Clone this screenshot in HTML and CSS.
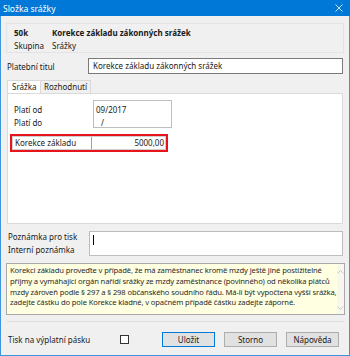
FILE: index.html
```html
<!DOCTYPE html>
<html lang="cs">
<head>
  <meta charset="UTF-8" />
  <title>Složka srážky</title>
  <link rel="stylesheet" href="styles.css">
</head>
<body>
  <div class="dialog">
    <div class="titlebar">
      <span class="title">Složka srážky</span>
      <svg class="close" width="8" height="8" viewBox="0 0 8 8"><path d="M0.5 0.5L7.5 7.5M7.5 0.5L0.5 7.5" stroke="#cfe3f7" stroke-width="1"/></svg>
    </div>

    <div class="content">
      <div class="head-panel">
        <b>50k</b><b>Korekce základu zákonných srážek</b>
        <span>Skupina</span><span>Srážky</span>
      </div>

      <div class="row">
        <label class="lbl">Platební titul</label>
        <div class="field">Korekce základu zákonných srážek</div>
      </div>

      <div class="tabs">
        <div class="tab active">Srážka</div>
        <div class="tab">Rozhodnutí</div>
      </div>
      <div class="tab-panel">
        <div class="dates">
          <div class="dl">
            <span>Platí od</span>
            <span>Platí do</span>
          </div>
          <div class="dbox">
            <span>09/2017</span>
            <span class="slash">/</span>
          </div>
        </div>
        <div class="red-box">
          <div class="amount">
            <span class="al">Korekce základu</span>
            <span class="av">5000,00</span>
          </div>
        </div>
      </div>

      <div class="notes">
        <div class="dl">
          <span>Poznámka pro tisk</span>
          <span>Interní poznámka</span>
        </div>
        <div class="notes-box"><span class="caret"></span></div>
      </div>

      <div class="info">
        <div class="info-text">
          <div>Korekci základu proveďte v případě, že má zaměstnanec kromě mzdy ještě jiné postižitelné</div>
          <div>příjmy a vymáhající orgán nařídí srážky ze mzdy zaměstnance (povinného) od několika plátců</div>
          <div>mzdy zároveň podle § 297 a § 298 občanského soudního řádu. Má-li být vypočtena vyšší srážka,</div>
          <div>zadejte částku do pole Korekce kladné, v opačném případě částku zadejte záporné.</div>
        </div>
        <div class="scroll">
          <svg width="7" height="4" viewBox="0 0 7 4"><path d="M0.5 3.5L3.5 0.5L6.5 3.5" fill="none" stroke="#c8c8c8"/></svg>
          <svg width="7" height="4" viewBox="0 0 7 4"><path d="M0.5 0.5L3.5 3.5L6.5 0.5" fill="none" stroke="#c8c8c8"/></svg>
        </div>
      </div>

      <div class="sep"></div>

      <div class="footer">
        <span class="print">Tisk na výplatní pásku</span>
        <span class="check"></span>
        <button class="btn default">Uložit</button>
        <button class="btn">Storno</button>
        <button class="btn">Nápověda</button>
      </div>
    </div>
  </div>
</body>
</html>
```

FILE: styles.css
```css
body {
  margin: 0;
  font-family: "Noto Sans", "Open Sans", sans-serif;
  font-size: 8px;
  color: #1a1a1a;
  background: #f0f0f0;
}
.dialog {
  width: 350px;
  height: 356px;
  box-sizing: border-box;
  border: 1px solid #3f95dd;
  border-top: none;
  background: #f0f0f0;
}
.titlebar {
  height: 16px;
  margin: 0 -1px;
  background: #0078d7;
  color: white;
  display: flex;
  align-items: center;
  justify-content: space-between;
  padding: 0 7px 0 3px;
}
.title {
  font-size: 8.5px;
}
.content {
  padding: 0 5px 0 5px;
}
.head-panel {
  margin-top: 7px;
  height: 30px;
  box-sizing: border-box;
  border: 1px solid #e3e3e3;
  display: grid;
  grid-template-columns: 38px 1fr;
  padding: 3px 0 0 7px;
  line-height: 11px;
}
.row {
  display: flex;
  align-items: center;
  margin-top: 5px;
  height: 16px;
}
.lbl {
  width: 81px;
  padding-left: 1px;
}
.field {
  flex: 1;
  height: 16px;
  box-sizing: border-box;
  border: 1px solid #7a7a7a;
  background: white;
  padding: 0 4px;
  line-height: 14px;
  margin-right: 1px;
}
.tabs {
  display: flex;
  margin: 6px 0 0 1px;
  height: 13px;
}
.tab {
  border: 1px solid #d9d9d9;
  border-bottom: none;
  padding: 0 3px;
  line-height: 12px;
  background: #f0f0f0;
}
.tab.active {
  background: white;
  width: 34px;
  box-sizing: border-box;
  padding-left: 4px;
}
.tab + .tab {
  border-left: none;
}
.tab-panel {
  margin: 0 1px 0 1px;
  height: 131px;
  box-sizing: border-box;
  background: white;
  border: 1px solid #dadada;
  padding: 6px 0 0 2px;
}
.dates {
  display: flex;
}
.dl {
  display: flex;
  flex-direction: column;
  width: 79px;
  padding-left: 4px;
  padding-top: 3px;
  line-height: 13px;
}
.dbox {
  width: 79px;
  height: 28px;
  box-sizing: border-box;
  border: 1px solid #bdbdbd;
  display: flex;
  flex-direction: column;
  padding: 2px 0 0 2px;
  line-height: 13px;
}
.slash {
  padding-left: 5px;
}
.red-box {
  margin-top: 5px;
  width: 158px;
  height: 18px;
  box-sizing: border-box;
  border: 2px solid #e8141c;
}
.amount {
  display: flex;
  height: 14px;
  box-sizing: border-box;
  border: 1px solid #cfcfcf;
  line-height: 12px;
}
.al {
  width: 76px;
  padding-left: 2px;
  border-right: 1px solid #a0a0a0;
}
.av {
  flex: 1;
  text-align: right;
  padding-right: 1px;
}
.notes {
  display: flex;
  margin-top: 7px;
}
.notes .dl {
  width: 79px;
  padding-left: 2px;
  padding-top: 0;
  line-height: 12.5px;
}
.notes-box {
  flex: 1;
  height: 25px;
  box-sizing: border-box;
  border: 1px solid #bdbdbd;
  background: white;
  margin-left: 2px;
  margin-right: 1px;
  padding: 3px 0 0 3px;
}
.caret {
  display: block;
  width: 1px;
  height: 10px;
  background: #000;
}
.info {
  margin-top: 7px;
  margin-right: -1px;
  height: 52px;
  box-sizing: border-box;
  border: 1px solid #a9a9a9;
  background: #ffffe1;
  display: flex;
}
.info-text {
  flex: 1;
  padding: 1px 0 0 3px;
  font-size: 7.6px;
  letter-spacing: -0.12px;
  line-height: 10.8px;
  color: #2a2a2a;
  white-space: nowrap;
}
.scroll {
  width: 10px;
  background: #f7f7f0;
  display: flex;
  flex-direction: column;
  justify-content: space-between;
  align-items: center;
  padding: 6px 0 4px;
}
.sep {
  margin: 6px 0 0 1px;
  border-top: 1px solid #dcdcdc;
}
.footer {
  display: flex;
  align-items: center;
  margin-top: 10px;
  height: 15px;
}
.print {
  width: 114px;
  padding-left: 2px;
  box-sizing: border-box;
}
.check {
  width: 9px;
  height: 9px;
  box-sizing: border-box;
  border: 1px solid #333;
  background: white;
  margin-right: 33px;
}
.btn {
  width: 53px;
  height: 15px;
  box-sizing: border-box;
  border: 1px solid #adadad;
  background: #e1e1e1;
  font: inherit;
  padding: 0;
  margin-left: 9px;
  color: #1a1a1a;
}
.btn.default {
  border: 1px solid #0078d7;
  margin-left: 0;
}
```
